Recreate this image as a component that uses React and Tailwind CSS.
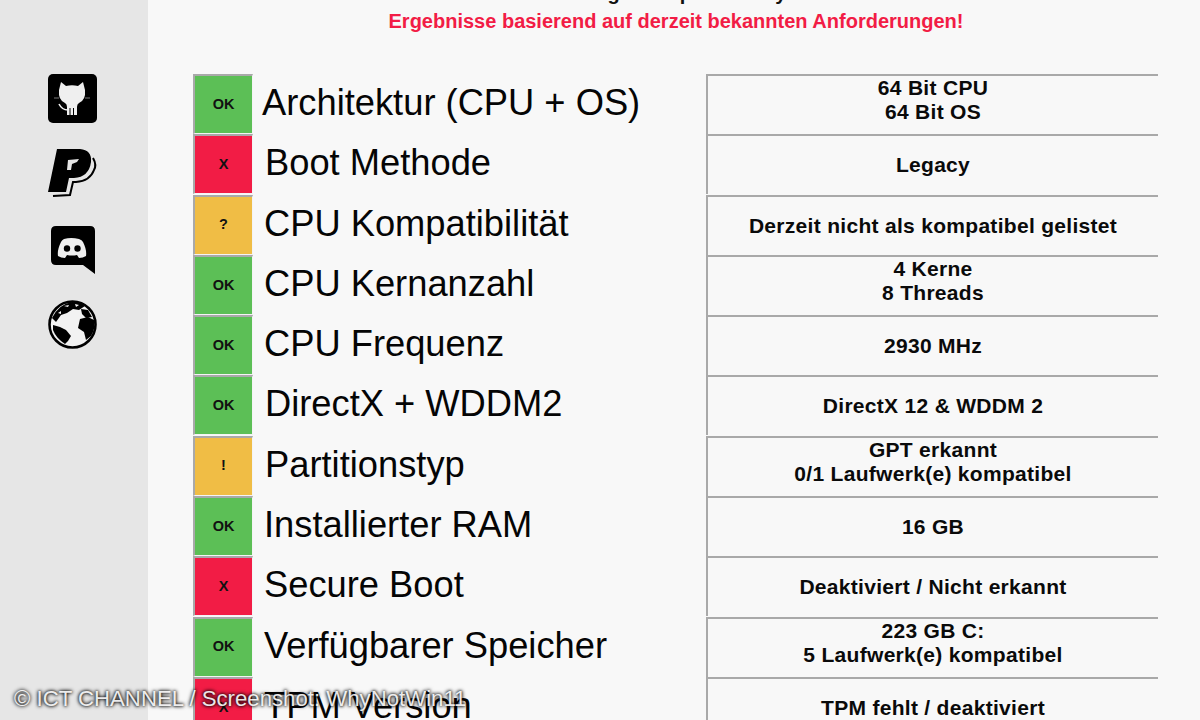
import React from "react";

const G = "bg-[#5cbf56]", R = "bg-[#f21c45]", Y = "bg-[#f0bd45]";
const rows = [
  ["OK", G, "Architektur (CPU + OS)", ["64 Bit CPU", "64 Bit OS"], "pl-[9px]"],
  ["X", R, "Boot Methode", ["Legacy"], "pl-[12px]"],
  ["?", Y, "CPU Kompatibilität", ["Derzeit nicht als kompatibel gelistet"], "pl-[11px]"],
  ["OK", G, "CPU Kernanzahl", ["4 Kerne", "8 Threads"], "pl-[11px]"],
  ["OK", G, "CPU Frequenz", ["2930 MHz"], "pl-[11px]"],
  ["OK", G, "DirectX + WDDM2", ["DirectX 12 & WDDM 2"], "pl-[12px]"],
  ["!", Y, "Partitionstyp", ["GPT erkannt", "0/1 Laufwerk(e) kompatibel"], "pl-[12px]"],
  ["OK", G, "Installierter RAM", ["16 GB"], "pl-[11px]"],
  ["X", R, "Secure Boot", ["Deaktiviert / Nicht erkannt"], "pl-[11px]"],
  ["OK", G, "Verfügbarer Speicher", ["223 GB C:", "5 Laufwerk(e) kompatibel"], "pl-[11px]"],
  ["X", R, "TPM Version", ["TPM fehlt / deaktiviert"], "pl-[11px]"],
];

function Row({ status, color, label, values, pad }) {
  return (
    <div className="flex h-[60.3px] shrink-0 items-stretch">
      <div className={`flex h-[60px] w-[60px] shrink-0 items-center justify-center border-t-2 border-l-2 border-b border-r border-t-[#a9a9a9] border-l-[#a9a9a9] border-b-[#f4f4f4] border-r-[#f4f4f4] text-[14.5px] font-bold text-[#111] ${color}`}>
        {status}
      </div>
      <div className={`w-[453px] shrink-0 ${pad} pt-[7px] text-[36.3px] leading-[44px] text-[#050505]`}>{label}</div>
      <div className={`flex h-[60px] w-[452px] shrink-0 flex-col items-center justify-center border-l-2 border-t-2 border-[#a9a9a9] text-[21px] font-bold leading-[24px] tracking-[0.3px] text-[#0a0a0a] ${values.length > 1 ? "pb-[10px]" : ""}`}>
        {values.map((v) => (
          <div key={v}>{v}</div>
        ))}
      </div>
    </div>
  );
}

function GithubIcon() {
  return (
    <svg width="58" height="58" viewBox="0 0 58 58">
      <rect x="4" y="4" width="49" height="49" rx="5" fill="#000" />
      <path d="M17 12 L22 16 Q28 14.5 34 16 L39 12 L41 20 Q42 30 35 33 Q33 34 33 37 L33 45 L23 45 L23 37 Q23 34 21 33 Q14 30 15 20 Z" fill="#efefef" />
      <path d="M26 38 V45 M29.5 38 V45" stroke="#000" strokeWidth="1" />
      <path d="M10 28 H15 M41 28 H46" stroke="#777" strokeWidth="1" />
      <path d="M15 34 Q18 40 24 40" stroke="#efefef" strokeWidth="1.6" fill="none" />
    </svg>
  );
}

function PaypalIcon() {
  return (
    <svg width="58" height="58" viewBox="0 0 58 58">
      <path d="M13 4 L36 4 Q48 5 47 17 Q45 32 30 33 L25 33 L22 47 L4 47 Z" fill="#000" />
      <path d="M24 15 L35 14 L33 17 L28 19 L27 25 L23 25 Z" fill="#e6e6e6" />
      <path d="M29 19.5 L33 18 L32 21 L29 22 Z" fill="#000" />
      <path d="M49 13 Q53 20 50 25 Q46 36 32 37 L29 37 L26 50 L9 51" stroke="#000" strokeWidth="2" fill="none" />
    </svg>
  );
}

function DiscordIcon() {
  return (
    <svg width="58" height="58" viewBox="0 0 58 58">
      <path d="M12 5 H46 Q51 5 51 10 V53 L39 44 H12 Q7 44 7 39 V10 Q7 5 12 5 Z" fill="#000" />
      <path d="M20 18 Q27 16 35 18 Q38 19 39 21 Q43 29 42 35 Q39 37 35 37 L33 34 Q28 35 23 34 L21 37 Q17 37 14 35 Q13 29 17 21 Q18 19 20 18 Z" fill="#efefef" />
      <circle cx="23" cy="27.5" r="3.2" fill="#000" />
      <circle cx="33.5" cy="27.5" r="3.2" fill="#000" />
    </svg>
  );
}

function GlobeIcon() {
  return (
    <svg width="58" height="58" viewBox="0 0 58 58">
      <circle cx="28.5" cy="28.5" r="23" fill="#f2f2f2" stroke="#000" strokeWidth="2.6" />
      <path d="M8 22 Q15 8 28 6 Q37 6 41 10 L35 14 L29 13 L23 17 L17 19 L12 26 Z" fill="#000" />
      <path d="M37 13 L44 14 L48 21 L42 22 L38 18 Z" fill="#000" />
      <path d="M36 23 L44 21 L50 24 Q52 32 47 40 L42 44 L40 36 L34 32 Z" fill="#000" />
      <path d="M9 29 L16 31 L22 34 L27 40 L24 45 L21 48 Q12 42 9 34 Z" fill="#000" />
      <path d="M20 10 L25 9 L24 11 Z M31 8 L35 9 L32 11 Z M14 17 L17 15 L17 18 Z" fill="#f2f2f2" />
    </svg>
  );
}

export default function App() {
  return (
    <div className="relative flex h-[720px] w-[1200px] overflow-hidden bg-[#f8f8f8] font-['Liberation_Sans',Arial,sans-serif]">
      <aside className="flex w-[148px] shrink-0 flex-col items-center gap-[17.3px] bg-[#e6e6e6] pt-[70px] pr-[2px] text-black">
        <GithubIcon />
        <PaypalIcon />
        <DiscordIcon />
        <GlobeIcon />
      </aside>
      <main className="flex min-w-0 flex-1 flex-col pl-[45px]">
        <div className="h-[9px] shrink-0 overflow-hidden">
          <div className="-mt-[19px] w-[979px] text-center text-[20px] font-bold leading-[24px] text-[#111]">Das Programm prüft Ihr System</div>
        </div>
        <div className="h-[65px] w-[966px] shrink-0 text-center text-[20px] font-bold leading-[24px] text-[#f21c45]">
          Ergebnisse basierend auf derzeit bekannten Anforderungen!
        </div>
        {rows.map((r) => (
          <Row key={r[2]} status={r[0]} color={r[1]} label={r[2]} values={r[3]} pad={r[4]} />
        ))}
      </main>
      <div className="absolute left-[14px] top-[686px] text-[22.2px] leading-[25px] text-white/90 [text-shadow:0_0_4px_#000,0_0_3px_#000]">
        © ICT CHANNEL / Screenshot: WhyNotWin11
      </div>
    </div>
  );
}
